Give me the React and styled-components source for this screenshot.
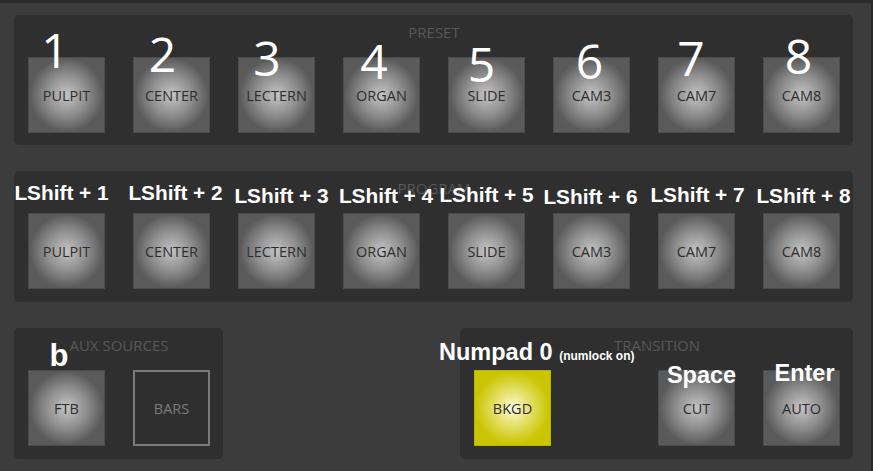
import styled, { createGlobalStyle } from 'styled-components';

const GlobalStyle = createGlobalStyle`
	html, body{
		margin: 0;
		padding: 0;
		background: #2a2a2a;
	}
	body{
		font-family: 'Open Sans', 'Liberation Sans', sans-serif;
	}
`;

const presets = [
	{name: 'PULPIT', key: '1', kx: -11.5, ky: -31, sx: -5, sy: -30},
	{name: 'CENTER', key: '2', kx: -9, ky: -27, sx: 4, sy: -30},
	{name: 'LECTERN', key: '3', kx: -9.5, ky: -23, sx: 5, sy: -27},
	{name: 'ORGAN', key: '4', kx: -7.5, ky: -20, sx: 4.5, sy: -27},
	{name: 'SLIDE', key: '5', kx: -5, ky: -17, sx: 0, sy: -28},
	{name: 'CAM3', key: '6', kx: -2, ky: -20, sx: -1, sy: -26},
	{name: 'CAM7', key: '7', kx: -5.5, ky: -23, sx: 1, sy: -28},
	{name: 'CAM8', key: '8', kx: -3, ky: -25, sx: 2, sy: -27},
];

function App(){
	return(
		<>
			<GlobalStyle/>
			<Switcher>
				<Panel $bottom={12}>
					<Title>PRESET</Title>
					<Row>
						{presets.map(p => (
							<Slot key={p.name}>
								<Button>{p.name}</Button>
								<Digit $x={p.kx} $y={p.ky}>{p.key}</Digit>
							</Slot>
						))}
					</Row>
				</Panel>
				<Panel>
					<Title>PROGRAM</Title>
					<Row>
						{presets.map(p => (
							<Slot key={p.name}>
								<Button>{p.name}</Button>
								<Hotkey $x={p.sx} $y={p.sy} $size={20.8}>LShift + {p.key}</Hotkey>
							</Slot>
						))}
					</Row>
				</Panel>
				<BottomRow>
					<Panel $width={209}>
						<Title>AUX SOURCES</Title>
						<Row>
							<Slot>
								<Button>FTB</Button>
								<Hotkey $x={-7.5} $y={-30} $size={31}>b</Hotkey>
							</Slot>
							<Slot>
								<Button $variant="outline">BARS</Button>
							</Slot>
						</Row>
					</Panel>
					<Panel $width={393}>
						<Title>TRANSITION</Title>
						<Row>
							<Slot>
								<Button $variant="active">BKGD</Button>
								<LeftHotkey $size={23.5}>
									Numpad 0 <small>(numlock on)</small>
								</LeftHotkey>
							</Slot>
							<Pair>
								<Slot>
									<Button>CUT</Button>
									<Hotkey $x={5} $y={-6} $size={23.5}>Space</Hotkey>
								</Slot>
								<Slot>
									<Button>AUTO</Button>
									<Hotkey $x={3} $y={-8} $size={23.5}>Enter</Hotkey>
								</Slot>
							</Pair>
						</Row>
					</Panel>
				</BottomRow>
			</Switcher>
		</>
	)
}

const Switcher = styled.div`
	width: 871px;
	height: 468px;
	margin-top: 3px;
	box-sizing: border-box;
	background: #3c3c3c;
	padding: 12px 0 0 14px;
	display: flex;
	flex-direction: column;
	gap: 26px;
`

const Panel = styled.section`
	width: ${p => p.$width || 839}px;
	box-sizing: border-box;
	background: #2f2f2f;
	border-radius: 5px;
	padding: 7px 13px ${p => p.$bottom || 13}px 14px;
	display: flex;
	flex-direction: column;
	gap: 15px;
`

const Title = styled.div`
	height: 20px;
	line-height: 20px;
	text-align: center;
	font-size: 15px;
	color: #585858;
`

const Row = styled.div`
	display: flex;
	justify-content: space-between;
	align-items: flex-start;
`

const BottomRow = styled.div`
	display: flex;
	justify-content: space-between;
	width: 839px;
`

const Pair = styled.div`
	display: flex;
	gap: 28px;
`

const Slot = styled.div`
	position: relative;
	width: 77px;
	height: 76px;
`

const Button = styled.div`
	width: 100%;
	height: 100%;
	box-sizing: border-box;
	display: flex;
	align-items: center;
	justify-content: center;
	font-size: 14.5px;
	color: ${p => p.$variant === 'outline' ? '#7c7c7c' : '#2e2e2e'};
	border: ${p => p.$variant === 'outline' ? '2px solid #7a7a7a' : '1px solid #4c4c4c'};
	background: ${p => p.$variant === 'active'
		? 'radial-gradient(circle closest-side, #fffde0 0%, #e8e47a 40%, #c9c500 100%)'
		: p.$variant === 'outline'
			? 'transparent'
			: 'radial-gradient(circle closest-side, #c4c4c4 0%, #8e8e8e 55%, #5a5a5a 100%)'};
	${p => p.$variant === 'active' && 'border-color: #b9b500;'}
`

const Digit = styled.span`
	position: absolute;
	left: calc(50% + ${p => p.$x}px);
	top: ${p => p.$y}px;
	transform: translateX(-50%);
	font-family: 'Open Sans', sans-serif;
	font-size: 48px;
	line-height: 1;
	color: #fff;
	white-space: nowrap;
`

const Hotkey = styled.span`
	position: absolute;
	left: calc(50% + ${p => p.$x}px);
	top: ${p => p.$y}px;
	transform: translateX(-50%);
	font-family: 'Liberation Sans', Arial, sans-serif;
	font-weight: bold;
	font-size: ${p => p.$size}px;
	line-height: 1;
	color: #fff;
	white-space: nowrap;
`

const LeftHotkey = styled.span`
	position: absolute;
	left: -35px;
	top: -29px;
	font-family: 'Liberation Sans', Arial, sans-serif;
	font-weight: bold;
	font-size: ${p => p.$size}px;
	line-height: 1;
	color: #fff;
	white-space: nowrap;
	small{
		font-size: 12px;
	}
`

export default App;
